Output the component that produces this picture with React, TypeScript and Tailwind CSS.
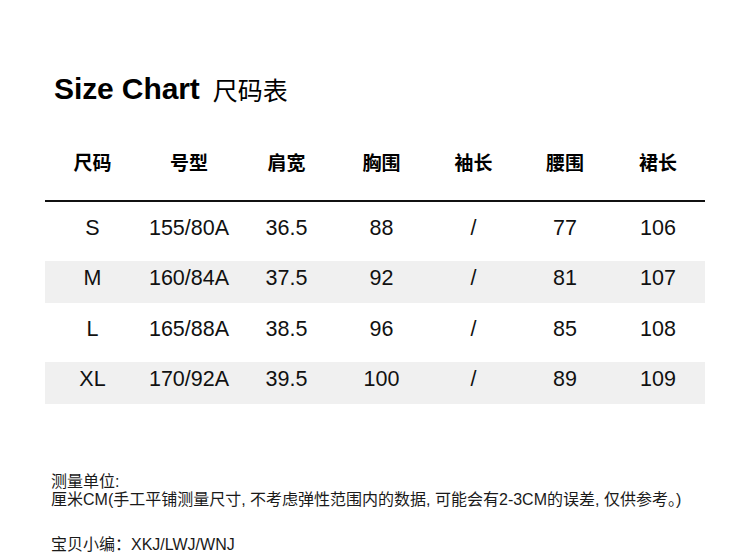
const headers = ["尺码", "号型", "肩宽", "胸围", "袖长", "腰围", "裙长"];

const rows = [
  ["S", "155/80A", "36.5", "88", "/", "77", "106"],
  ["M", "160/84A", "37.5", "92", "/", "81", "107"],
  ["L", "165/88A", "38.5", "96", "/", "85", "108"],
  ["XL", "170/92A", "39.5", "100", "/", "89", "109"],
];

const cols = "grid grid-cols-[95px_98px_97px_93px_91px_92px_94px]";

export default function App() {
  return (
    <div className="h-[559px] w-[750px] overflow-hidden bg-white pt-[70px] font-['Liberation_Sans','Noto_Sans_CJK_SC',sans-serif] text-[#111]">
      {/* Title */}
      <div className="flex h-[36px] items-center pl-[54px]">
        <span className="text-[30px] font-bold tracking-[-0.1px] text-black">Size Chart</span>
        <span className="ml-[13px] mt-[2px] font-['Noto_Sans_CJK_SC',sans-serif] text-[25px] leading-[30px] text-black">
          尺码表
        </span>
      </div>

      {/* Table */}
      <div className="ml-[45px] mt-[44px] w-[660px]">
        <div className={cols + " border-b-2 border-[#111] pb-[26px]"}>
          {headers.map((h) => (
            <div
              key={h}
              className="text-center font-['Noto_Sans_CJK_SC',sans-serif] text-[19px] font-bold leading-[24px] text-black"
            >
              {h}
            </div>
          ))}
        </div>
        {rows.map((r, i) => (
          <div
            key={r[0]}
            className={
              cols +
              (i % 2 === 1 ? " bg-[#f0f0f0] pb-[14px] pt-[6px]" : " pb-[22px] pt-[15px]")
            }
          >
            {r.map((c, j) => (
              <div key={j} className="text-center text-[21.5px] leading-[22px]">
                {c}
              </div>
            ))}
          </div>
        ))}
      </div>

      {/* Notes */}
      <div className="ml-[51px] mt-[69px] text-[16px] leading-[18px] text-[#1a1a1a]">
        <p>测量单位:</p>
        <p>厘米CM(手工平铺测量尺寸, 不考虑弹性范围内的数据, 可能会有2-3CM的误差, 仅供参考。)</p>
        <p className="mt-[27px]">宝贝小编：XKJ/LWJ/WNJ</p>
      </div>
    </div>
  );
}
